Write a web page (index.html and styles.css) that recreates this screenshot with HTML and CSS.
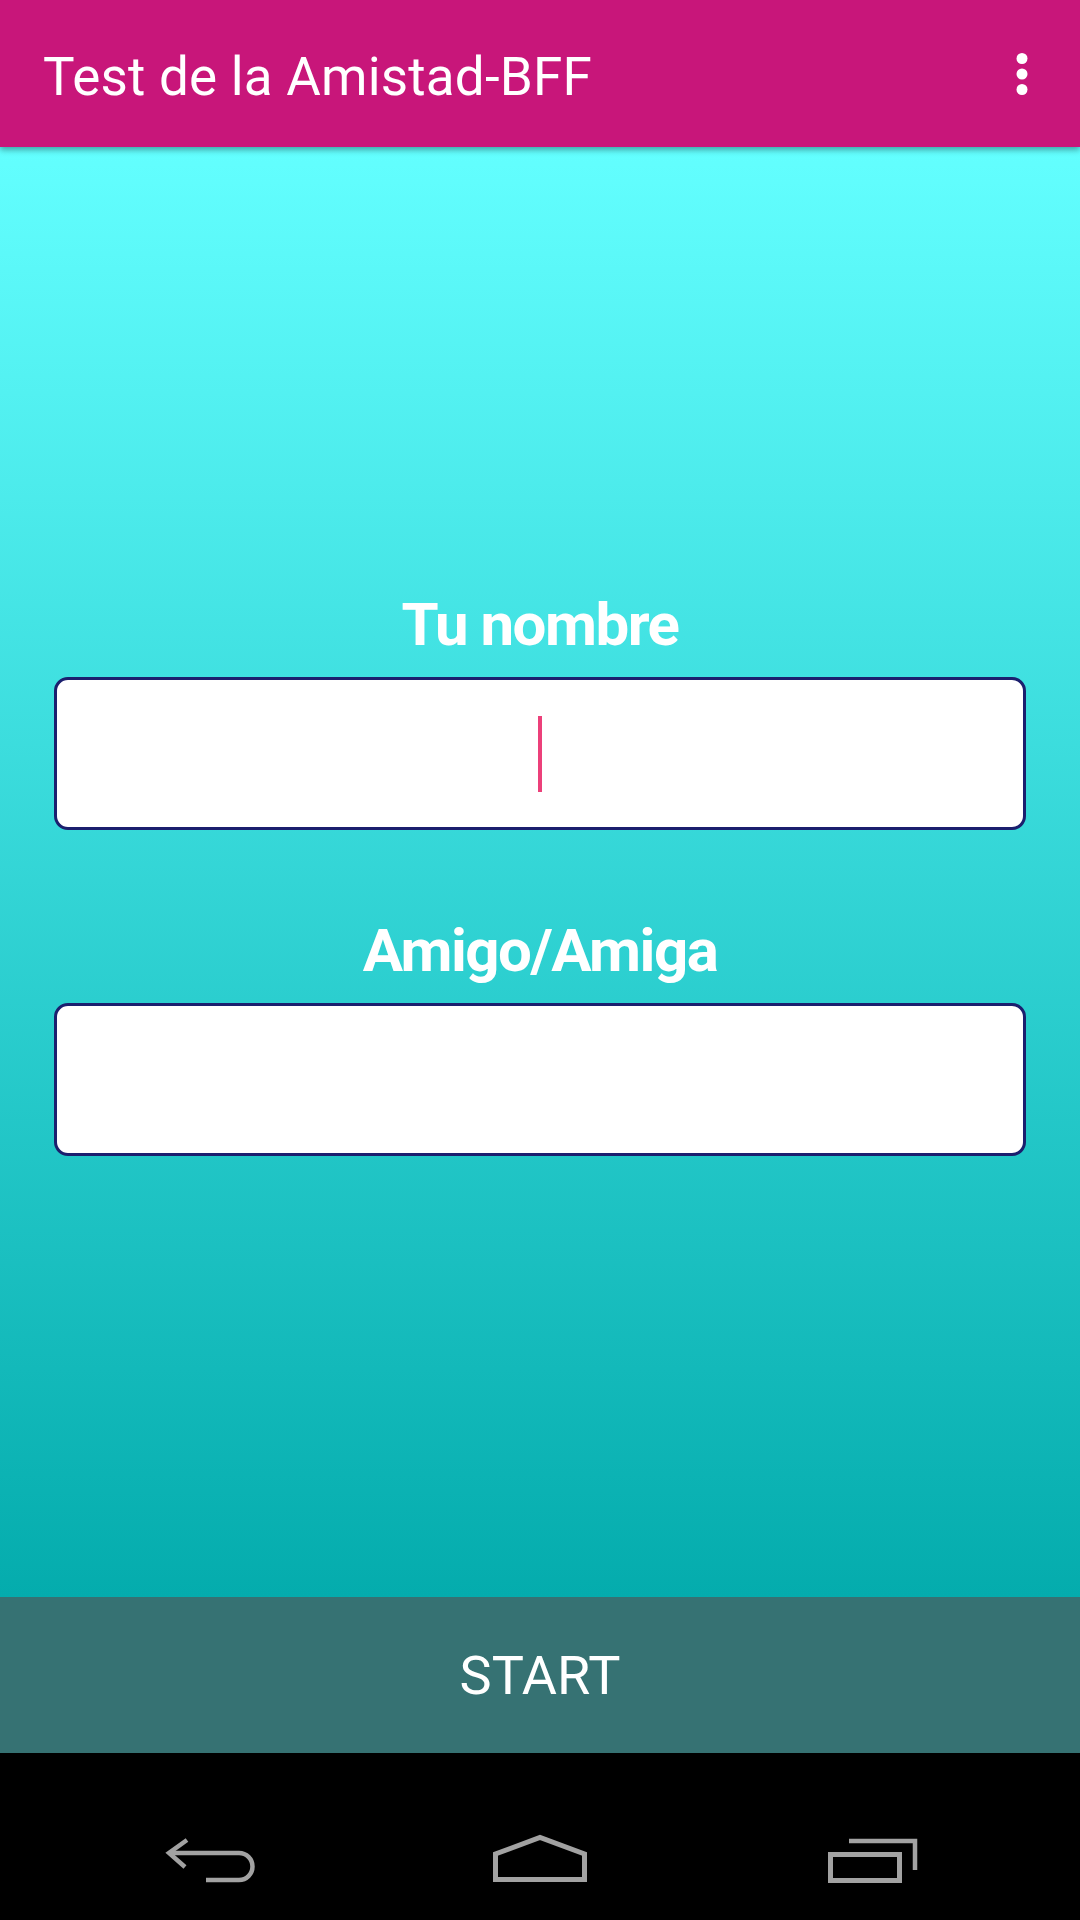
FILE: index.html
```html
<!DOCTYPE html>
<html lang="es">
<head>
  <meta charset="UTF-8" />
  <meta name="viewport" content="width=device-width, initial-scale=1.0"/>
  <title>Test de la Amistad-BFF</title>
  <link rel="stylesheet" href="styles.css">
</head>
<body>
  <header class="app-bar">
    <h1 class="app-title">Test de la Amistad-BFF</h1>
    <svg class="overflow" width="20" height="48" viewBox="0 0 20 48">
      <circle cx="10" cy="8.5" r="5.5" fill="#fff"/>
      <circle cx="10" cy="24" r="5.5" fill="#fff"/>
      <circle cx="10" cy="39.5" r="5.5" fill="#fff"/>
    </svg>
  </header>

  <main class="content">
    <div class="form">
      <label class="field-label">Tu nombre</label>
      <div class="field focused"><span class="caret"></span></div>

      <label class="field-label second">Amigo/Amiga</label>
      <div class="field"></div>
    </div>
  </main>

  <button class="start-button">START</button>

  <nav class="nav-bar">
    <div class="nav-btn">
      <!-- back -->
      <svg width="100" height="60" viewBox="0 0 100 60" fill="none" stroke="#a2a2a2" stroke-width="4.5">
        <path d="M27 10 L9 23 L25 37"/>
        <path d="M9 23 H79 A13.5 13.5 0 0 1 79 50 H46"/>
      </svg>
    </div>
    <div class="nav-btn">
      <!-- home -->
      <svg width="100" height="60" viewBox="0 0 100 60" fill="none" stroke="#a2a2a2" stroke-width="5">
        <polygon points="5.5,49.5 5.5,24 50,7.5 94.5,24 94.5,49.5"/>
      </svg>
    </div>
    <div class="nav-btn">
      <!-- recents -->
      <svg width="100" height="60" viewBox="0 0 100 60" fill="none" stroke="#a2a2a2" stroke-width="5">
        <rect x="10.5" y="24.5" width="69" height="26"/>
        <path d="M29 11 H95 V40" stroke-width="4.5"/>
      </svg>
    </div>
  </nav>
</body>
</html>
```

FILE: styles.css
```css
html, body {
  margin: 0;
  height: 100%;
}
body {
  width: 1080px;
  height: 1920px;
  display: flex;
  flex-direction: column;
  font-family: 'Roboto', 'Liberation Sans', sans-serif;
  color: #fff;
  overflow: hidden;
}
.app-bar {
  position: relative;
  z-index: 2;
  height: 147px;
  flex-shrink: 0;
  display: flex;
  align-items: center;
  justify-content: space-between;
  padding: 0 48px 0 43px;
  background: #c8167a;
  box-shadow: 0 3px 6px rgba(0, 0, 0, 0.35);
}
.app-title {
  margin: 0;
  padding-top: 6px;
  font-size: 53px;
  letter-spacing: 0.2px;
  line-height: 60px;
  font-weight: 400;
}
.content {
  flex: 1;
  display: flex;
  flex-direction: column;
  justify-content: center;
  background: linear-gradient(to bottom, #63ffff, #04acad);
}
.form {
  display: flex;
  flex-direction: column;
  padding: 0 54px;
}
.field-label {
  text-align: center;
  font-size: 60px;
  letter-spacing: -1.5px;
  line-height: 74px;
  font-weight: 700;
  margin-bottom: 15px;
}
.field-label.second {
  margin-top: 84px;
}
.field {
  height: 153px;
  box-sizing: border-box;
  background: #fff;
  border: 3px solid #1b1f6e;
  border-radius: 14px;
  display: flex;
  align-items: center;
  justify-content: center;
}
.caret {
  width: 4px;
  height: 76px;
  background: #ec407a;
}
.start-button {
  height: 156px;
  flex-shrink: 0;
  border: none;
  margin: 0;
  background: #367273;
  color: #fff;
  font-family: 'Roboto', 'Liberation Sans', sans-serif;
  font-size: 54px;
  font-weight: 400;
}
.nav-bar {
  height: 167px;
  flex-shrink: 0;
  background: #000;
  display: flex;
  justify-content: center;
}
.nav-btn {
  width: 330px;
  display: flex;
  justify-content: center;
  padding-top: 77px;
}
.nav-btn svg {
  display: block;
}
```
